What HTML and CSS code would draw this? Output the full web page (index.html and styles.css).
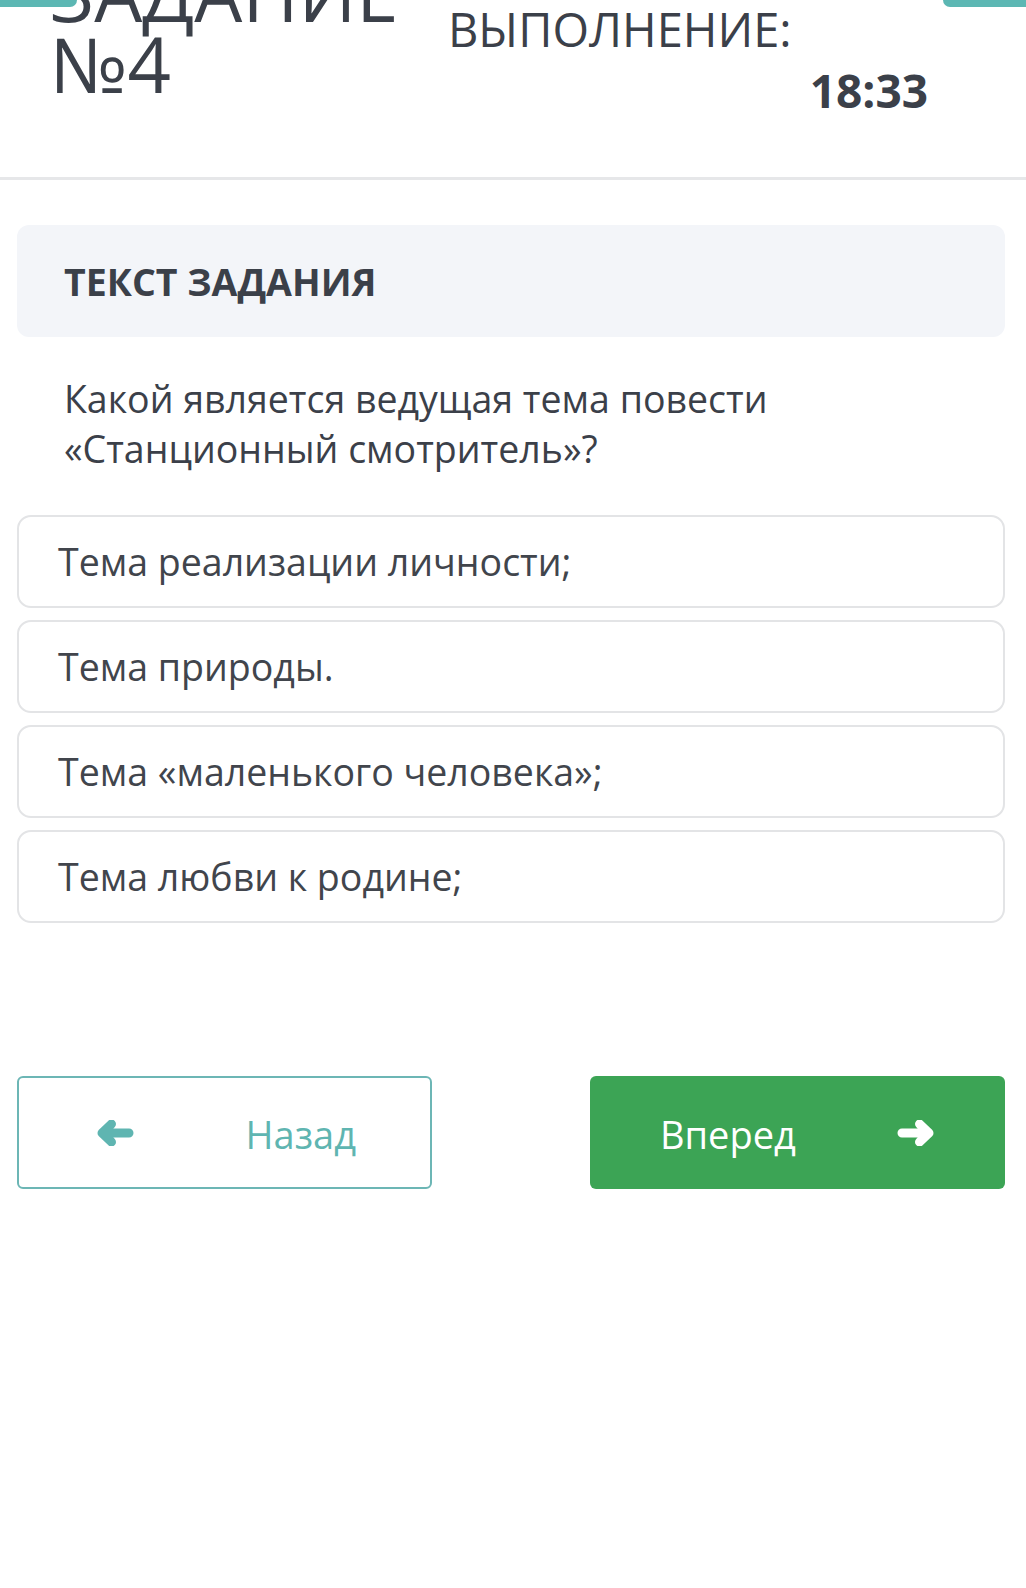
FILE: index.html
```html
<!DOCTYPE html>
<html lang="ru">
<head>
    <meta charset="UTF-8">
    <meta name="viewport" content="width=device-width, initial-scale=1.0">
    <title>Задание №4</title>
    <link rel="stylesheet" href="styles.css">
</head>
<body>

<div class="tab tab-left"></div>
<div class="tab tab-right"></div>

<div class="header">
    <h1 class="task-title">ЗАДАНИЕ<br>№4</h1>
    <div class="timer">
        <div class="timer-label">ВЫПОЛНЕНИЕ:</div>
        <div class="timer-value">18:33</div>
    </div>
</div>

<div class="content">
    <div class="task-head">ТЕКСТ ЗАДАНИЯ</div>
    <p class="question">Какой является ведущая тема повести<br>«Станционный смотритель»?</p>

    <div class="answers">
        <div class="answer">Тема реализации личности;</div>
        <div class="answer">Тема природы.</div>
        <div class="answer">Тема «маленького человека»;</div>
        <div class="answer">Тема любви к родине;</div>
    </div>

    <div class="nav">
        <button class="nav-btn back">
            <svg class="arrow" viewBox="0 0 38 26" width="38" height="26">
                <path d="M33 13H7M15.5 4L6 13l9.5 9" fill="none" stroke="currentColor" stroke-width="9" stroke-linecap="round" stroke-linejoin="round"/>
            </svg>
            <span>Назад</span>
        </button>
        <button class="nav-btn next">
            <span>Вперед</span>
            <svg class="arrow" viewBox="0 0 38 26" width="38" height="26">
                <path d="M5 13h26M22.5 4L32 13l-9.5 9" fill="none" stroke="currentColor" stroke-width="9" stroke-linecap="round" stroke-linejoin="round"/>
            </svg>
        </button>
    </div>
</div>

</body>
</html>
```

FILE: styles.css
```css
body {
    font-family: 'Open Sans', 'Noto Sans', sans-serif;
    color: #3b4049;
    background: #fff;
    margin: 0;
    padding: 0;
    overflow: hidden;
}

/* bits of the buttons above, cut off by the screen edge */
.tab {
    position: absolute;
    top: 0;
    height: 7px;
    background-color: #5cb7b3;
    z-index: 1;
}
.tab-left {
    left: 0;
    width: 77px;
    border-bottom-right-radius: 7px;
}
.tab-right {
    right: 0;
    width: 83px;
    border-bottom-left-radius: 7px;
}

.header {
    display: flex;
    justify-content: space-between;
    height: 177px;
    padding: 0 98px 0 50px;
    border-bottom: 3px solid #e6e7e9;
}
.task-title {
    margin: -43px 0 0;
    font-size: 76px;
    font-weight: 400;
    line-height: 71px;
}
.timer {
    width: 478px;
}
.timer-label {
    margin: 1px 0 0 -2px;
    font-size: 47px;
    line-height: 56px;
}
.timer-value {
    margin-top: 5px;
    text-align: right;
    font-size: 46px;
    font-weight: 700;
    line-height: 56px;
}

.content {
    padding: 45px 21px 0 17px;
}
.task-head {
    display: flex;
    align-items: center;
    height: 112px;
    padding-left: 47px;
    background-color: #f3f5f9;
    border-radius: 12px;
    font-size: 37.5px;
    font-weight: 700;
}
.question {
    margin: 37px 0 41px;
    padding-left: 47px;
    font-size: 37.5px;
    line-height: 50px;
}

.answers {
    display: flex;
    flex-direction: column;
    gap: 12px;
}
.answer {
    display: flex;
    align-items: center;
    height: 89px;
    padding-left: 39px;
    border: 2px solid #e3e4e6;
    border-radius: 14px;
    font-size: 37.5px;
    color: #41454c;
}

.nav {
    display: flex;
    justify-content: space-between;
    margin-top: 153px;
}
.nav-btn {
    display: flex;
    align-items: center;
    justify-content: space-between;
    width: 415px;
    height: 113px;
    box-sizing: border-box;
    border-radius: 6px;
    font-family: inherit;
    font-size: 38px;
    cursor: pointer;
}
.nav-btn.back {
    padding: 0 74px 0 77px;
    background: #fff;
    border: 2px solid #6cb6b5;
    color: #5fb5b1;
}
.nav-btn.next {
    padding: 0 70px 0 70px;
    background-color: #3ca455;
    border: none;
    color: #fff;
}
.nav-btn span {
    line-height: 1;
    margin-top: 2px;
}
.arrow {
    display: block;
}
```
